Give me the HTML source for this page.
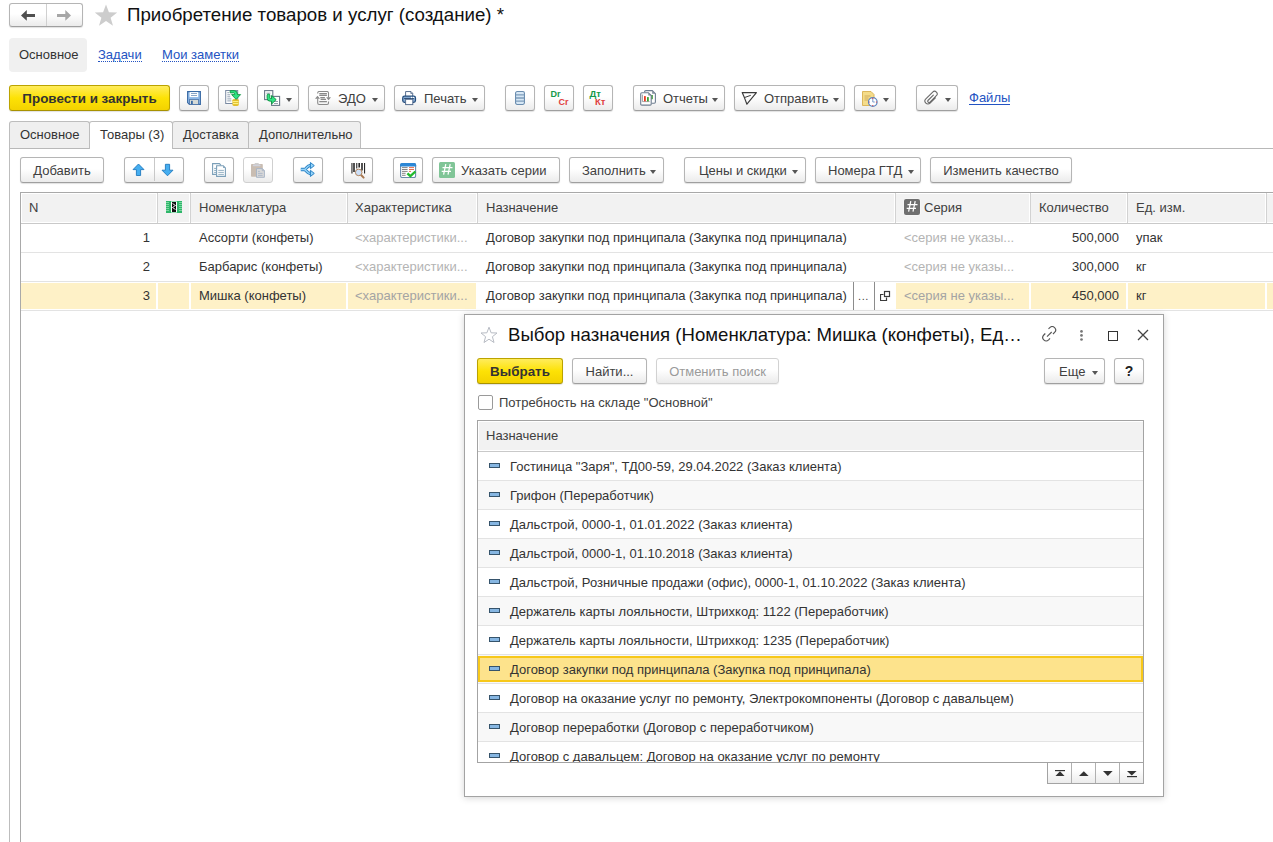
<!DOCTYPE html>
<html><head><meta charset="utf-8">
<style>
*{box-sizing:border-box}
html,body{margin:0;padding:0}
body{width:1273px;height:842px;position:relative;overflow:hidden;background:#fff;font-family:"Liberation Sans",sans-serif;font-size:13px;color:#333}
.a{position:absolute;white-space:nowrap}
.btn{position:absolute;height:26px;border:1px solid #b5b5b5;border-bottom-color:#9f9f9f;border-radius:3px;background:linear-gradient(#fff 0%,#fff 45%,#ebebeb 100%);box-shadow:0 1px 1px rgba(0,0,0,.12);line-height:25px;text-align:center;color:#404040;white-space:nowrap}
.btn svg{position:absolute}
.dd{position:absolute;width:0;height:0;border-left:3.5px solid transparent;border-right:3.5px solid transparent;border-top:4px solid #555}
.yel{background:linear-gradient(#ffec5c 0%,#fde205 50%,#f3d200 100%);border-color:#bba300;border-bottom-color:#a89200;color:#333;font-weight:bold}
.lnk{color:#2353c2;border-bottom:1px dotted #2353c2}
.vl{position:absolute;width:1px}
.hl{position:absolute;height:1px}
</style></head><body>

<!-- top nav -->
<div class="btn" style="left:9px;top:3px;width:74px;height:24px;padding:0"></div>
<div class="vl" style="left:46px;top:4px;height:22px;background:#d0d0d0"></div>
<svg class="a" style="left:20px;top:9px" width="16" height="13" viewBox="0 0 16 13"><path d="M1 6.4 L6.8 1 V5 H15 V7.9 H6.8 V11.8 Z" fill="#4f4f4f"/></svg>
<svg class="a" style="left:56px;top:9px" width="16" height="13" viewBox="0 0 16 13"><path d="M15 6.4 L9.3 1 V5 H1 V7.9 H9.3 V11.8 Z" fill="#a6a6a6"/></svg>
<svg class="a" style="left:94px;top:4px" width="24" height="23" viewBox="0 0 24 23"><path d="M12 0.5 L14.9 8.3 L23.2 8.6 L16.6 13.7 L19 21.8 L12 17.1 L5 21.8 L7.4 13.7 L0.8 8.6 L9.1 8.3 Z" fill="#cdcdcd"/></svg>
<div class="a" style="left:127px;top:3px;font-size:18.7px;line-height:24px;color:#111">Приобретение товаров и услуг (создание) *</div>

<!-- form nav -->
<div class="a" style="left:9px;top:38px;width:78px;height:34px;background:#f0f0f0;border-radius:4px"></div>
<div class="a" style="left:19px;top:47px;line-height:16px">Основное</div>
<div class="a lnk" style="left:98px;top:48px;line-height:13px">Задачи</div>
<div class="a lnk" style="left:162px;top:48px;line-height:13px">Мои заметки</div>


<!-- main toolbar -->
<div class="btn yel" style="left:9px;top:85px;width:161px;font-size:13.4px">Провести и закрыть</div>
<div class="btn" style="left:179px;top:85px;width:30px">
 <svg style="left:7px;top:5px" width="14" height="14" viewBox="0 0 14 14"><path d="M0.6 0.6 H13.4 V13.4 H2.4 L0.6 11.6 Z" fill="#8db7e6" stroke="#3a6aa4" stroke-width="1.1"/><rect x="2.6" y="1.1" width="8.6" height="5" fill="#fff"/><path d="M4 2.5h6M4 4.5h6" stroke="#7e9cc0" stroke-width="0.9"/><rect x="2.6" y="8.4" width="8.8" height="5" fill="#d6dad6" stroke="#4a72a8" stroke-width="0.8"/><rect x="4" y="9.8" width="1.8" height="3.3" fill="#3a6aa4"/></svg>
</div>
<div class="btn" style="left:218px;top:85px;width:30px">
 <svg style="left:6px;top:4px" width="17" height="17" viewBox="0 0 17 17"><rect x="0.7" y="0.5" width="12" height="13" fill="#fff" stroke="#7a8aa2" stroke-width="1"/><path d="M2.3 2.7h2M2.3 4.8h3M2.3 6.8h3M2.3 8.9h4M2.3 10.9h4" stroke="#8796aa" stroke-width="0.9"/><path d="M7.4 10.2 Q7.4 9 10.6 9 Q13.8 9 13.8 10.2 V14.8 Q13.8 16 10.6 16 Q7.4 16 7.4 14.8 Z" fill="#e2be2a"/><path d="M7.8 11.6 H13.4 M7.8 13.6 H13.4" stroke="#fff68a" stroke-width="1"/><path d="M5.2 0.6 H9.2 Q12.5 0.6 12.5 4.6 H15.6 L11.1 9.4 L6.6 4.6 H9.7 Q9.7 2.9 8.7 2.9 H5.2 Z" fill="#2fe383" stroke="#0e8f3f" stroke-width="0.85" stroke-linejoin="round"/></svg>
</div>
<div class="btn" style="left:257px;top:85px;width:42px">
 <svg style="left:6px;top:4px" width="17" height="17" viewBox="0 0 17 17"><rect x="0.6" y="0.6" width="8.2" height="9" fill="#fff" stroke="#6a7888" stroke-width="1.1"/><path d="M2.4 3.2h4" stroke="#8a96a6" stroke-width="0.9"/><rect x="7.6" y="6.4" width="8" height="9" fill="#fff" stroke="#6a7888" stroke-width="1.1"/><path d="M10 11.5h4M10 13.5h4" stroke="#8a96a6" stroke-width="0.9"/><path d="M3.1 5 Q3.1 4.1 4.45 4.1 Q5.8 4.1 5.8 5 V7.9 Q5.8 8.5 6.4 8.5 H7.6 V5.5 L12.2 9.6 L7.6 14 V11.2 H6.2 Q3.1 11.2 3.1 8.2 Z" fill="#2fe383" stroke="#0e8f3f" stroke-width="0.9" stroke-linejoin="round"/></svg>
 <div class="dd" style="left:28px;top:12px"></div>
</div>
<div class="btn" style="left:308px;top:85px;width:77px;text-align:left;padding-left:29px">ЭДО
 <svg style="left:6px;top:5px" width="17" height="15" viewBox="0 0 17 15"><g fill="none" stroke="#8a8a8a" stroke-width="1.1"><path d="M2.7 2.6 V2 Q2.7 0.5 4.2 0.5 H12 Q13.5 0.5 13.5 2 V6.5"/><path d="M2.7 7.5 V12 Q2.7 13.5 4.2 13.5 H12 Q13.5 13.5 13.5 12 V10.6"/><path d="M4.3 2.6H11.9M4.3 4.4H11.9M5.3 6.6H9.9M5.6 8.4H11M4.3 10.6H11.9"/></g><path d="M0 7.8 L2.5 4.8 L5 7.8 Z" fill="#8a8a8a"/><path d="M11.1 6.2 L16 6.2 L13.55 9.2 Z" fill="#8a8a8a"/></svg>
 <div class="dd" style="left:63px;top:12px"></div>
</div>
<div class="btn" style="left:394px;top:85px;width:91px;text-align:left;padding-left:29px">Печать
 <svg style="left:7px;top:5px" width="15" height="15" viewBox="0 0 15 15"><path d="M3.6 5.2 V0.55 H9 L10.7 2.3 V5.2" fill="#fff" stroke="#5a7090" stroke-width="1"/><path d="M8.8 0.6 V2.5 H10.7" fill="none" stroke="#5a7090" stroke-width="0.8"/><rect x="0.7" y="5.2" width="12.8" height="6.2" rx="1.8" fill="#86aad3" stroke="#244d7c" stroke-width="1.2"/><path d="M2.2 7.5 H12" stroke="#2a4a70" stroke-width="1"/><circle cx="9.6" cy="6.5" r="0.7" fill="#fff"/><circle cx="11.6" cy="6.5" r="0.7" fill="#fff"/><rect x="3.6" y="8.3" width="7.2" height="5.3" fill="#fff" stroke="#5a7090" stroke-width="1"/></svg>
 <div class="dd" style="left:77px;top:12px"></div>
</div>
<div class="btn" style="left:505px;top:85px;width:30px">
 <svg style="left:9px;top:5px" width="10" height="14" viewBox="0 0 10 14"><rect x="0.55" y="0.55" width="8.9" height="12.9" rx="1.6" fill="#d6e7f5" stroke="#6b8daf" stroke-width="1.1"/><path d="M0.8 3.9h8.4M0.8 7h8.4M0.8 10.2h8.4" stroke="#7f9dbb" stroke-width="1.3"/></svg>
</div>
<div class="btn" style="left:544px;top:85px;width:30px">
 <svg style="left:4px;top:3px" width="22" height="20" viewBox="0 0 22 20"><text x="1.5" y="7.8" font-family="Liberation Sans" font-weight="bold" font-size="9" fill="#15994a">Dr</text><text x="9.5" y="15.8" font-family="Liberation Sans" font-weight="bold" font-size="9" fill="#e04040">Cr</text></svg>
</div>
<div class="btn" style="left:583px;top:85px;width:30px">
 <svg style="left:4px;top:3px" width="22" height="20" viewBox="0 0 22 20"><text x="1.5" y="7.8" font-family="Liberation Sans" font-weight="bold" font-size="9.5" fill="#15994a">Дт</text><text x="7" y="15.8" font-family="Liberation Sans" font-weight="bold" font-size="9.5" fill="#e04040">Кт</text></svg>
</div>
<div class="btn" style="left:633px;top:85px;width:92px;text-align:left;padding-left:29px">Отчеты
 <svg style="left:6px;top:4px" width="17" height="17" viewBox="0 0 17 17"><path d="M4.6 2.2 V1.9 Q4.6 0.6 5.9 0.6 H12.3 L15.4 3.7 V12.1 Q15.4 13.3 14.2 13.3 H11.6" fill="#fff" stroke="#6e7e90" stroke-width="1.1"/><path d="M12.2 0.7 V3.8 H15.3 Z" fill="#7d8a98"/><rect x="11" y="5" width="1.8" height="4.2" fill="#3aa030"/><path d="M0.7 3.9 Q0.7 2.7 1.9 2.7 H8.4 L11.2 5.5 V14.3 Q11.2 15.1 10.2 15.1 H1.9 Q0.7 15.1 0.7 13.9 Z" fill="#fff" stroke="#6e7e90" stroke-width="1.1"/><path d="M8.3 2.8 V5.6 H11.1 Z" fill="#7d8a98"/><path d="M2.4 4.6 V11.6 H9.6" fill="none" stroke="#8a8a8a" stroke-width="0.8"/><rect x="4" y="6.1" width="1.8" height="5.2" fill="#ec3a22"/><rect x="7" y="7.1" width="1.8" height="4.2" fill="#3aa030"/></svg>
 <div class="dd" style="left:78px;top:12px"></div>
</div>
<div class="btn" style="left:734px;top:85px;width:111px;text-align:left;padding-left:29px">Отправить
 <svg style="left:6px;top:5px" width="17" height="15" viewBox="0 0 17 15"><path d="M1.2 1.6 H15.4 L5.9 13.2 L3.4 6.6 Z" fill="none" stroke="#3c3c3c" stroke-width="1.15" stroke-linejoin="round"/><path d="M3.4 6.6 L9.8 4.3" stroke="#3c3c3c" stroke-width="1"/></svg>
 <div class="dd" style="left:98px;top:12px"></div>
</div>
<div class="btn" style="left:854px;top:85px;width:42px">
 <svg style="left:7px;top:5px" width="16" height="16" viewBox="0 0 16 16"><path d="M0.5 0.5 H9 L12 3.5 V14.5 H0.5 Z" fill="#f4dc8a" stroke="#d8b050" stroke-width="0.9"/><path d="M2.5 5h6M2.5 7h4M2.5 9h4" stroke="#c8a050" stroke-width="0.8"/><circle cx="10.8" cy="11" r="4.3" fill="#fff" stroke="#5b86c0" stroke-width="1.2"/><path d="M10.8 8v3h2" stroke="#5b86c0" stroke-width="0.8" fill="none"/><circle cx="10.8" cy="7.4" r="0.6" fill="#e03030"/><circle cx="10.8" cy="14.6" r="0.6" fill="#e03030"/><circle cx="7.2" cy="11" r="0.6" fill="#e03030"/><circle cx="14.4" cy="11" r="0.6" fill="#e03030"/></svg>
 <div class="dd" style="left:28px;top:12px"></div>
</div>
<div class="btn" style="left:916px;top:85px;width:42px">
 <svg style="left:7px;top:4px" width="15" height="15" viewBox="0 0 15 15"><g transform="rotate(45 7.5 7.5) translate(3.5 -1)"><path d="M3.6 5.5 V12.8 A1.3 1.3 0 0 0 6.2 12.8 V3.8 A2.6 2.6 0 0 0 1 3.8 V13.5 A3 3 0 0 0 7 13.5 V6" fill="none" stroke="#6a6a6a" stroke-width="1.1" stroke-linecap="round"/></g></svg>
 <div class="dd" style="left:28px;top:12px"></div>
</div>
<div class="a lnk" style="left:969px;top:92px;line-height:12px;border-bottom-style:solid">Файлы</div>

<!-- tabs -->
<div class="hl" style="left:9px;top:148px;width:1264px;background:#b8b8b8"></div>
<div class="vl" style="left:9px;top:148px;height:694px;background:#bdbdbd"></div>
<div class="a" style="left:9px;top:121px;width:81px;height:27px;background:#efefef;border:1px solid #bdbdbd;border-bottom:none;border-radius:3px 3px 0 0;padding-left:10px;line-height:26px">Основное</div>
<div class="a" style="left:89px;top:121px;width:84px;height:28px;background:#fff;border:1px solid #bdbdbd;border-bottom:none;border-radius:3px 3px 0 0;padding-left:10px;line-height:26px">Товары (3)</div>
<div class="a" style="left:172px;top:121px;width:77px;height:27px;background:#efefef;border:1px solid #bdbdbd;border-bottom:none;border-radius:3px 3px 0 0;padding-left:10px;line-height:26px">Доставка</div>
<div class="a" style="left:248px;top:121px;width:113px;height:27px;background:#efefef;border:1px solid #bdbdbd;border-bottom:none;border-radius:3px 3px 0 0;padding-left:10px;line-height:26px">Дополнительно</div>


<!-- inner toolbar -->
<div class="btn" style="left:20px;top:157px;width:84px">Добавить</div>
<div class="btn" style="left:124px;top:157px;width:60px"></div>
<div class="vl" style="left:154px;top:158px;height:23px;background:#c8c8c8"></div>
<svg class="a" style="left:132px;top:163px" width="13" height="14" viewBox="0 0 13 14"><path d="M6.5 1 L12 6.6 L8.6 6.6 L8.6 12.5 L4.4 12.5 L4.4 6.6 L1 6.6 Z" fill="#45aef0" stroke="#2079bd" stroke-width="0.9" stroke-linejoin="round"/></svg>
<svg class="a" style="left:161px;top:163px" width="13" height="14" viewBox="0 0 13 14"><path d="M6.5 12.8 L12 7.2 L8.6 7.2 L8.6 1.3 L4.4 1.3 L4.4 7.2 L1 7.2 Z" fill="#45aef0" stroke="#2079bd" stroke-width="0.9" stroke-linejoin="round"/></svg>
<div class="btn" style="left:204px;top:157px;width:30px">
 <svg style="left:7px;top:5px" width="15" height="15" viewBox="0 0 15 15"><path d="M4.6 11.4 H0.6 V0.6 H7.4 L8.6 1.8 V2.4" fill="#fff" stroke="#7b9fb8" stroke-width="1.1"/><path d="M2.2 5.4h2M2.2 7.4h2M2.2 9.4h2" stroke="#7b9fb8" stroke-width="0.9"/><path d="M4.6 2.8 H11.3 L13.4 4.9 V13.4 H4.6 Z" fill="#fff" stroke="#7b9fb8" stroke-width="1.1"/><path d="M11.2 2.9 V5 H13.3 Z" fill="#7b9fb8"/><path d="M6.3 7.4h5.6M6.3 9.4h5.6M6.3 11.4h5.6" stroke="#8aa8bc" stroke-width="0.9"/></svg>
</div>
<div class="btn" style="left:243px;top:157px;width:30px;border-color:#d0d0d0;box-shadow:none">
 <svg style="left:6px;top:5px" width="16" height="16" viewBox="0 0 16 16"><rect x="1" y="0.9" width="11.8" height="12.9" rx="0.8" fill="#c9bdb2"/><rect x="4.6" y="0" width="4.2" height="1.5" rx="0.6" fill="#cfcfcf"/><rect x="2.8" y="1.6" width="7.8" height="1.6" rx="0.8" fill="#d0d2dc"/><path d="M6.5 5.6 H12.4 L14.4 7.6 V14.3 H6.5 Z" fill="#d9d9d9" stroke="#a9b6c6" stroke-width="1"/><path d="M12.3 5.7 V7.7 H14.3" fill="none" stroke="#a9b6c6" stroke-width="0.9"/><path d="M8 8.4h1.8M8 10.4h4.6M8 12.4h4.6" stroke="#a9b6c6" stroke-width="0.9"/></svg>
</div>
<div class="btn" style="left:293px;top:157px;width:30px">
 <svg style="left:6px;top:4px" width="16" height="16" viewBox="0 0 16 16"><path d="M0.8 7.5 H4.2 C6.2 7.5 7.2 3.6 9.8 3.6 H11.2 M4.2 7.5 C6.2 7.5 7.2 11.4 9.8 11.4 H11.2" fill="none" stroke="#2b82c4" stroke-width="3.3"/><path d="M0.8 7.5 H4.2 C6.2 7.5 7.2 3.6 9.8 3.6 H11.2 M4.2 7.5 C6.2 7.5 7.2 11.4 9.8 11.4 H11.2" fill="none" stroke="#94d4fa" stroke-width="1.3"/><path d="M10.4 0.5 L14.3 3.6 L10.4 6.7 Z M10.4 8.3 L14.3 11.4 L10.4 14.5 Z" fill="#94d4fa" stroke="#2b82c4" stroke-width="1" stroke-linejoin="round"/></svg>
</div>
<div class="btn" style="left:343px;top:157px;width:30px">
 <svg style="left:7px;top:5px" width="15" height="16" viewBox="0 0 15 16"><rect x="0.4" y="0" width="1.1" height="10.5" fill="#2a2a2a"/><rect x="2.2" y="0" width="1.6" height="9" fill="#2a2a2a"/><rect x="5.2" y="0" width="1.1" height="5.5" fill="#2a2a2a"/><rect x="7.4" y="0" width="1.6" height="4.5" fill="#2a2a2a"/><rect x="10.2" y="0" width="1.6" height="7.5" fill="#2a2a2a"/><rect x="13" y="0" width="1.1" height="10.5" fill="#2a2a2a"/><path d="M10.1 12 L12.6 14.6" stroke="#a87850" stroke-width="2" stroke-linecap="round"/><circle cx="7.7" cy="9.4" r="3.3" fill="#cde0f8" stroke="#b0825a" stroke-width="1"/></svg>
</div>
<div class="btn" style="left:393px;top:157px;width:30px">
 <svg style="left:6px;top:5px" width="17" height="15" viewBox="0 0 17 15"><rect x="0.6" y="0.6" width="15" height="14" rx="1.6" fill="#fff" stroke="#6a8aaa" stroke-width="1.1"/><path d="M0 3.4 V2 Q0 0 2 0 H14.2 Q16.2 0 16.2 2 V3.4 Z" fill="#2c87d6"/><path d="M2 4.6h5.6M2 6.5h5.6M2 8.4h5.6M2 10.3h3.6M2 12.3h3.6" stroke="#777" stroke-width="0.9"/><path d="M9 4.6h5M9 6.5h5M9 8.4h2" stroke="#e0603c" stroke-width="0.9"/><path d="M7.4 10.3 L10.4 13.2 L15.4 8.5" fill="none" stroke="#22bb2e" stroke-width="2.4" stroke-linejoin="miter"/></svg>
</div>
<div class="btn" style="left:432px;top:157px;width:128px;text-align:left;padding-left:28px">Указать серии
 <svg style="left:6px;top:4px" width="16" height="16" viewBox="0 0 16 16"><rect x="0" y="0" width="16" height="16" rx="1.5" fill="#80c597"/><path d="M6.8 2.2 L4.6 12.7 M11.2 2.2 L9 12.7 M3.5 5.5 H13.5 M2.7 9.4 H12" stroke="#fff" stroke-width="1.25"/></svg>
</div>
<div class="btn" style="left:569px;top:157px;width:95px;text-align:left;padding-left:12px">Заполнить
 <div class="dd" style="left:80px;top:12px"></div>
</div>
<div class="btn" style="left:684px;top:157px;width:122px;text-align:left;padding-left:14px">Цены и скидки
 <div class="dd" style="left:107px;top:12px"></div>
</div>
<div class="btn" style="left:815px;top:157px;width:106px;text-align:left;padding-left:12px">Номера ГТД
 <div class="dd" style="left:92px;top:12px"></div>
</div>
<div class="btn" style="left:930px;top:157px;width:142px">Изменить качество</div>

<!-- table -->
<div class="hl" style="left:20px;top:192px;width:1253px;background:#a9a9a9"></div>
<div class="vl" style="left:20px;top:192px;height:650px;background:#a9a9a9"></div>
<div class="a" style="left:21px;top:193px;width:136px;height:30px;background:#f2f2f2;border:1px solid #fff;border-left:1px solid #fff"></div>
<div class="a" style="left:157px;top:193px;width:33px;height:30px;background:#f2f2f2;border:1px solid #fff;border-left:none"></div>
<div class="a" style="left:190px;top:193px;width:157px;height:30px;background:#f2f2f2;border:1px solid #fff;border-left:none"></div>
<div class="a" style="left:347px;top:193px;width:130px;height:30px;background:#f2f2f2;border:1px solid #fff;border-left:none"></div>
<div class="a" style="left:477px;top:193px;width:418px;height:30px;background:#f2f2f2;border:1px solid #fff;border-left:none"></div>
<div class="a" style="left:895px;top:193px;width:135px;height:30px;background:#f2f2f2;border:1px solid #fff;border-left:none"></div>
<div class="a" style="left:1030px;top:193px;width:97px;height:30px;background:#f2f2f2;border:1px solid #fff;border-left:none"></div>
<div class="a" style="left:1127px;top:193px;width:139px;height:30px;background:#f2f2f2;border:1px solid #fff;border-left:none"></div>
<div class="a" style="left:1266px;top:193px;width:35px;height:30px;background:#f2f2f2;border:1px solid #fff;border-left:none"></div>
<div class="vl" style="left:157px;top:193px;height:30px;background:#d2d2d2"></div>
<div class="vl" style="left:190px;top:193px;height:30px;background:#d2d2d2"></div>
<div class="vl" style="left:347px;top:193px;height:30px;background:#d2d2d2"></div>
<div class="vl" style="left:477px;top:193px;height:30px;background:#d2d2d2"></div>
<div class="vl" style="left:895px;top:193px;height:30px;background:#d2d2d2"></div>
<div class="vl" style="left:1030px;top:193px;height:30px;background:#d2d2d2"></div>
<div class="vl" style="left:1127px;top:193px;height:30px;background:#d2d2d2"></div>
<div class="vl" style="left:1266px;top:193px;height:30px;background:#d2d2d2"></div>
<div class="hl" style="left:21px;top:223px;width:1252px;background:#c9c9c9"></div>
<div class="a" style="left:29px;top:200px;line-height:15px;color:#404040">N</div>
<div class="a" style="left:199px;top:200px;line-height:15px;color:#404040">Номенклатура</div>
<div class="a" style="left:355px;top:200px;line-height:15px;color:#404040">Характеристика</div>
<div class="a" style="left:486px;top:200px;line-height:15px;color:#404040">Назначение</div>
<div class="a" style="left:924px;top:200px;line-height:15px;color:#404040">Серия</div>
<div class="a" style="left:1039px;top:200px;line-height:15px;color:#404040">Количество</div>
<div class="a" style="left:1136px;top:200px;line-height:15px;color:#404040">Ед. изм.</div>
<svg class="a" style="left:166px;top:201px" width="16" height="12" viewBox="0 0 16 12"><rect x="0" y="0" width="16" height="12" fill="#2fb66a"/><path d="M0 1.5h3M0 3.5h3M0 5.5h3M0 7.5h3M0 9.5h3M13 1.5h3M13 3.5h3M13 5.5h3M13 7.5h3M13 9.5h3" stroke="#8fe0b0" stroke-width="0.8"/><rect x="5" y="0.5" width="6" height="11" fill="#fff"/><rect x="6" y="1" width="4" height="10" fill="#111"/><path d="M6.5 2.5l3 2-3 2 3 2" stroke="#fff" stroke-width="0.9" fill="none"/></svg>
<svg class="a" style="left:903px;top:198px" width="18" height="18" viewBox="0 0 18 18"><rect x="0.5" y="0.5" width="17" height="17" rx="2.5" fill="#fff" fill-opacity="0.7"/><rect x="1" y="1" width="16" height="16" rx="2" fill="#6f6f6f"/><path d="M7.8 3.2 L5.6 13.7 M12.2 3.2 L10 13.7 M4.5 6.5 H14.5 M3.7 10.4 H13" stroke="#fff" stroke-width="1.25"/></svg>
<div class="hl" style="left:21px;top:252px;width:1252px;background:#e3e3e3"></div>
<div class="a" style="left:21px;top:230px;width:129px;text-align:right;line-height:15px">1</div>
<div class="a" style="left:199px;top:230px;line-height:15px">Ассорти (конфеты)</div>
<div class="a" style="left:355px;top:230px;line-height:15px;color:#b4b4b4">&lt;характеристики...</div>
<div class="a" style="left:486px;top:230px;line-height:15px">Договор закупки под принципала (Закупка под принципала)</div>
<div class="a" style="left:904px;top:230px;line-height:15px;color:#b4b4b4">&lt;серия не указы...</div>
<div class="a" style="left:1031px;top:230px;width:88px;text-align:right;line-height:15px">500,000</div>
<div class="a" style="left:1136px;top:230px;line-height:15px">упак</div>
<div class="hl" style="left:21px;top:281px;width:1252px;background:#e3e3e3"></div>
<div class="a" style="left:21px;top:259px;width:129px;text-align:right;line-height:15px">2</div>
<div class="a" style="left:199px;top:259px;line-height:15px">Барбарис (конфеты)</div>
<div class="a" style="left:355px;top:259px;line-height:15px;color:#b4b4b4">&lt;характеристики...</div>
<div class="a" style="left:486px;top:259px;line-height:15px">Договор закупки под принципала (Закупка под принципала)</div>
<div class="a" style="left:904px;top:259px;line-height:15px;color:#b4b4b4">&lt;серия не указы...</div>
<div class="a" style="left:1031px;top:259px;width:88px;text-align:right;line-height:15px">300,000</div>
<div class="a" style="left:1136px;top:259px;line-height:15px">кг</div>
<div class="a" style="left:21px;top:283px;width:135px;height:26px;background:#fef1c7"></div>
<div class="a" style="left:158px;top:283px;width:31px;height:26px;background:#fef1c7"></div>
<div class="a" style="left:191px;top:283px;width:155px;height:26px;background:#fef1c7"></div>
<div class="a" style="left:348px;top:283px;width:128px;height:26px;background:#fef1c7"></div>
<div class="a" style="left:896px;top:283px;width:133px;height:26px;background:#fef1c7"></div>
<div class="a" style="left:1031px;top:283px;width:95px;height:26px;background:#fef1c7"></div>
<div class="a" style="left:1128px;top:283px;width:137px;height:26px;background:#fef1c7"></div>
<div class="a" style="left:1267px;top:283px;width:33px;height:26px;background:#fef1c7"></div>
<div class="hl" style="left:21px;top:310px;width:1252px;background:#e3e3e3"></div>
<div class="a" style="left:21px;top:288px;width:129px;text-align:right;line-height:15px">3</div>
<div class="a" style="left:199px;top:288px;line-height:15px">Мишка (конфеты)</div>
<div class="a" style="left:355px;top:288px;line-height:15px;color:#a4a4a4">&lt;характеристики...</div>
<div class="a" style="left:486px;top:288px;line-height:15px">Договор закупки под принципала (Закупка под принципала)</div>
<div class="a" style="left:904px;top:288px;line-height:15px;color:#a4a4a4">&lt;серия не указы...</div>
<div class="a" style="left:1031px;top:288px;width:88px;text-align:right;line-height:15px">450,000</div>
<div class="a" style="left:1136px;top:288px;line-height:15px">кг</div>
<div class="vl" style="left:853px;top:282px;height:28px;background:#8c8c8c"></div>
<div class="vl" style="left:874px;top:282px;height:28px;background:#8c8c8c"></div>
<div class="a" style="left:858px;top:289px;line-height:15px;font-size:11px;letter-spacing:0.6px;color:#444">...</div>
<svg class="a" style="left:880px;top:290px" width="11" height="11" viewBox="0 0 11 11"><path d="M3.5 4.5H0.5V10.5H6.5V7.5" fill="none" stroke="#3a3a3a" stroke-width="1.2"/><rect x="4.5" y="1.5" width="5" height="5" fill="none" stroke="#3a3a3a" stroke-width="1.2"/></svg>
<!-- dialog -->
<div class="a" style="left:464px;top:314px;width:700px;height:483px;background:#fff;border:1px solid #a3a3a3;box-shadow:0 1px 7px rgba(0,0,0,.17)"></div>
<svg class="a" style="left:480px;top:326px" width="18" height="18" viewBox="0 0 18 18"><path d="M9 1.2 L11.1 6.8 L17 7 L12.4 10.7 L14 16.5 L9 13.2 L4 16.5 L5.6 10.7 L1 7 L6.9 6.8 Z" fill="none" stroke="#b8bcc4" stroke-width="1" stroke-linejoin="round"/></svg>
<div class="a" style="left:508px;top:324px;font-size:18.6px;line-height:22px;color:#111">Выбор назначения (Номенклатура: Мишка (конфеты), Ед…</div>
<svg class="a" style="left:1041px;top:326px" width="17" height="17" viewBox="0 0 17 17"><path d="M6 10.6 L10.7 6" stroke="#555" stroke-width="1.15"/><path d="M7.5 2.8 L8.8 1.6 C10.2 0.3 12.2 0.3 13.6 1.6 C15 3 15 5 13.6 6.4 L12 8" fill="none" stroke="#555" stroke-width="1.15"/><path d="M9 12.3 L7.6 13.8 C6.2 15.2 4.2 15.2 2.8 13.8 C1.4 12.4 1.4 10.4 2.8 9 L4.3 7.5" fill="none" stroke="#555" stroke-width="1.15"/></svg>
<svg class="a" style="left:1079px;top:329px" width="5" height="13" viewBox="0 0 5 13"><circle cx="2.5" cy="2.4" r="1.35" fill="#777"/><circle cx="2.5" cy="6.45" r="1.35" fill="#777"/><circle cx="2.5" cy="10.5" r="1.35" fill="#777"/></svg>
<div class="a" style="left:1108px;top:331px;width:10px;height:10px;border:1.4px solid #333"></div>
<svg class="a" style="left:1137px;top:329px" width="12" height="12" viewBox="0 0 12 12"><path d="M1 1 L11 11 M11 1 L1 11" stroke="#444" stroke-width="1.3"/></svg>
<div class="btn yel" style="left:477px;top:358px;width:86px;font-size:13.4px">Выбрать</div>
<div class="btn" style="left:572px;top:358px;width:75px">Найти...</div>
<div class="btn" style="left:656px;top:358px;width:123px;color:#9a9a9a;border-color:#d2d2d2;box-shadow:0 1px 1px rgba(0,0,0,.06)">Отменить поиск</div>
<div class="btn" style="left:1044px;top:358px;width:61px;text-align:left;padding-left:14px">Еще<div class="dd" style="left:47px;top:12px"></div></div>
<div class="btn" style="left:1114px;top:358px;width:30px;font-weight:bold;color:#222;font-size:14px">?</div>
<div class="a" style="left:478px;top:395px;width:15px;height:15px;border:1px solid #9a9a9a;border-radius:2px;background:#fff"></div>
<div class="a" style="left:499px;top:395px;line-height:15px;color:#404040">Потребность на складе "Основной"</div>
<div class="a" style="left:477px;top:420px;width:667px;height:343px;border:1px solid #a3a3a3;background:#fff"></div>
<div class="a" style="left:478px;top:421px;width:665px;height:30px;background:#f2f2f2;border:1px solid #fff;border-right:none"></div>
<div class="hl" style="left:478px;top:451px;width:665px;background:#c9c9c9"></div>
<div class="a" style="left:486px;top:428px;line-height:15px;color:#404040">Назначение</div>
<div class="a" style="left:478px;top:452px;width:665px;height:310px;overflow:hidden">
<div class="a" style="left:0;top:0px;width:665px;height:28px;background:#fff"></div>
<div class="hl" style="left:0;top:28px;width:665px;background:#e3e3e3"></div>
<svg class="a" style="left:11px;top:11px" width="11" height="5" viewBox="0 0 11 5"><rect x="0.5" y="0.5" width="10" height="4" fill="#86b6e2" stroke="#36546c"/></svg>
<div class="a" style="left:32px;top:7px;line-height:15px">Гостиница "Заря", ТД00-59, 29.04.2022 (Заказ клиента)</div>
<div class="a" style="left:0;top:29px;width:665px;height:28px;background:#f8f8f8"></div>
<div class="hl" style="left:0;top:57px;width:665px;background:#e3e3e3"></div>
<svg class="a" style="left:11px;top:40px" width="11" height="5" viewBox="0 0 11 5"><rect x="0.5" y="0.5" width="10" height="4" fill="#86b6e2" stroke="#36546c"/></svg>
<div class="a" style="left:32px;top:36px;line-height:15px">Грифон (Переработчик)</div>
<div class="a" style="left:0;top:58px;width:665px;height:28px;background:#fff"></div>
<div class="hl" style="left:0;top:86px;width:665px;background:#e3e3e3"></div>
<svg class="a" style="left:11px;top:69px" width="11" height="5" viewBox="0 0 11 5"><rect x="0.5" y="0.5" width="10" height="4" fill="#86b6e2" stroke="#36546c"/></svg>
<div class="a" style="left:32px;top:65px;line-height:15px">Дальстрой, 0000-1, 01.01.2022 (Заказ клиента)</div>
<div class="a" style="left:0;top:87px;width:665px;height:28px;background:#f8f8f8"></div>
<div class="hl" style="left:0;top:115px;width:665px;background:#e3e3e3"></div>
<svg class="a" style="left:11px;top:98px" width="11" height="5" viewBox="0 0 11 5"><rect x="0.5" y="0.5" width="10" height="4" fill="#86b6e2" stroke="#36546c"/></svg>
<div class="a" style="left:32px;top:94px;line-height:15px">Дальстрой, 0000-1, 01.10.2018 (Заказ клиента)</div>
<div class="a" style="left:0;top:116px;width:665px;height:28px;background:#fff"></div>
<div class="hl" style="left:0;top:144px;width:665px;background:#e3e3e3"></div>
<svg class="a" style="left:11px;top:127px" width="11" height="5" viewBox="0 0 11 5"><rect x="0.5" y="0.5" width="10" height="4" fill="#86b6e2" stroke="#36546c"/></svg>
<div class="a" style="left:32px;top:123px;line-height:15px">Дальстрой, Розничные продажи (офис), 0000-1, 01.10.2022 (Заказ клиента)</div>
<div class="a" style="left:0;top:145px;width:665px;height:28px;background:#f8f8f8"></div>
<div class="hl" style="left:0;top:173px;width:665px;background:#e3e3e3"></div>
<svg class="a" style="left:11px;top:156px" width="11" height="5" viewBox="0 0 11 5"><rect x="0.5" y="0.5" width="10" height="4" fill="#86b6e2" stroke="#36546c"/></svg>
<div class="a" style="left:32px;top:152px;line-height:15px">Держатель карты лояльности, Штрихкод: 1122 (Переработчик)</div>
<div class="a" style="left:0;top:174px;width:665px;height:28px;background:#fff"></div>
<div class="hl" style="left:0;top:202px;width:665px;background:#e3e3e3"></div>
<svg class="a" style="left:11px;top:185px" width="11" height="5" viewBox="0 0 11 5"><rect x="0.5" y="0.5" width="10" height="4" fill="#86b6e2" stroke="#36546c"/></svg>
<div class="a" style="left:32px;top:181px;line-height:15px">Держатель карты лояльности, Штрихкод: 1235 (Переработчик)</div>
<div class="a" style="left:0;top:203px;width:665px;height:28px;background:#f8f8f8"></div>
<div class="hl" style="left:0;top:231px;width:665px;background:#e3e3e3"></div>
<div class="a" style="left:0;top:204px;width:665px;height:26px;background:#fde38c;border:2px solid #f7c81a"></div>
<svg class="a" style="left:11px;top:214px" width="11" height="5" viewBox="0 0 11 5"><rect x="0.5" y="0.5" width="10" height="4" fill="#86b6e2" stroke="#36546c"/></svg>
<div class="a" style="left:32px;top:210px;line-height:15px">Договор закупки под принципала (Закупка под принципала)</div>
<div class="a" style="left:0;top:232px;width:665px;height:28px;background:#fff"></div>
<div class="hl" style="left:0;top:260px;width:665px;background:#e3e3e3"></div>
<svg class="a" style="left:11px;top:243px" width="11" height="5" viewBox="0 0 11 5"><rect x="0.5" y="0.5" width="10" height="4" fill="#86b6e2" stroke="#36546c"/></svg>
<div class="a" style="left:32px;top:239px;line-height:15px">Договор на оказание услуг по ремонту, Электрокомпоненты (Договор с давальцем)</div>
<div class="a" style="left:0;top:261px;width:665px;height:28px;background:#f8f8f8"></div>
<div class="hl" style="left:0;top:289px;width:665px;background:#e3e3e3"></div>
<svg class="a" style="left:11px;top:272px" width="11" height="5" viewBox="0 0 11 5"><rect x="0.5" y="0.5" width="10" height="4" fill="#86b6e2" stroke="#36546c"/></svg>
<div class="a" style="left:32px;top:268px;line-height:15px">Договор переработки (Договор с переработчиком)</div>
<div class="a" style="left:0;top:290px;width:665px;height:28px;background:#fff"></div>
<div class="hl" style="left:0;top:318px;width:665px;background:#e3e3e3"></div>
<svg class="a" style="left:11px;top:301px" width="11" height="5" viewBox="0 0 11 5"><rect x="0.5" y="0.5" width="10" height="4" fill="#86b6e2" stroke="#36546c"/></svg>
<div class="a" style="left:32px;top:297px;line-height:15px">Договор с давальцем: Договор на оказание услуг по ремонту</div>
</div>
<div class="a" style="left:1047px;top:762px;width:97px;height:22px;border:1px solid #a3a3a3;background:linear-gradient(#fff 30%,#ececec)"></div>
<div class="vl" style="left:1071px;top:763px;height:20px;background:#b0b0b0"></div>
<div class="vl" style="left:1095px;top:763px;height:20px;background:#b0b0b0"></div>
<div class="vl" style="left:1119px;top:763px;height:20px;background:#b0b0b0"></div>
<svg class="a" style="left:1050px;top:765px" width="92" height="16" viewBox="0 0 92 16"><path d="M5 5.6h10" stroke="#333" stroke-width="1.2"/><path d="M5.5 11 L10 6.3 L14.5 11 Z" fill="#333"/><path d="M29 11 L33.8 6.2 L38.6 11 Z" fill="#333"/><path d="M53 6 L57.8 11 L62.6 6 Z" fill="#333"/><path d="M77 6 L81.8 10.5 L86.6 6 Z" fill="#333"/><path d="M77 11.6h10" stroke="#333" stroke-width="1.2"/></svg>
</body></html>
